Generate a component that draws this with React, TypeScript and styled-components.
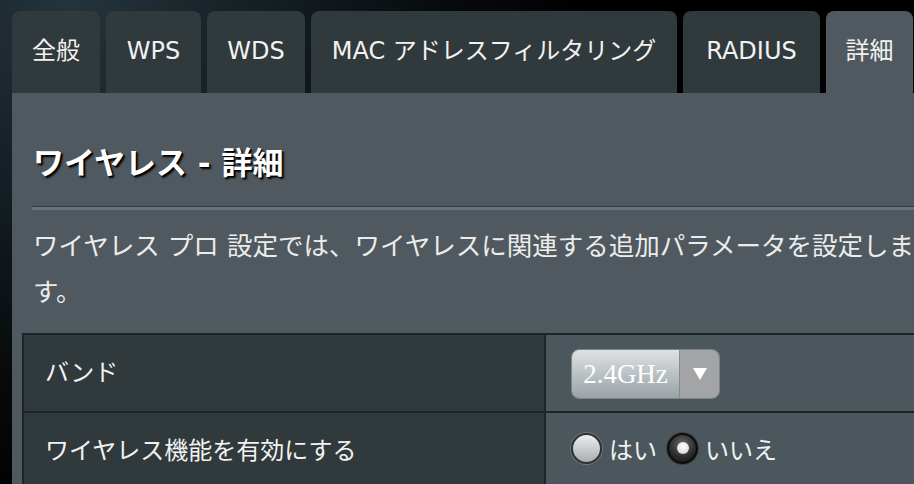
import React from "react";
import styled, { createGlobalStyle } from "styled-components";

const GlobalStyle = createGlobalStyle`
  html, body {
    margin: 0;
    padding: 0;
    overflow: hidden;
    height: 100%;
  }
  body {
    background: radial-gradient(circle at 70px 0px, #25343b 0px, #162127 170px, #070a0c 380px, #000 520px);
    font-family: "DejaVu Sans", "Noto Sans CJK JP", sans-serif;
    color: #fff;
  }
`;

const CJK = `"DejaVu Sans", "Noto Sans CJK JP", sans-serif`;

const Page = styled.div`
  padding: 11px 0 0 12px;
  width: 100vw;
  height: 100vh;
  box-sizing: border-box;
  overflow: hidden;
`;

const TabBar = styled.div`
  display: flex;
  gap: 6px;
`;

const Tab = styled.div<{ $active?: boolean; $width: number }>`
  flex: 0 0 auto;
  width: ${(p) => p.$width}px;
  height: 82px;
  box-sizing: border-box;
  padding-top: 26px;
  border-radius: 8px 8px 0 0;
  background: ${(p) => (p.$active ? "#4f595f" : "#30393c")};
  color: #f2f2f2;
  font-family: ${CJK};
  font-size: 24px;
  line-height: 28px;
  text-align: center;
  white-space: nowrap;
`;

const Panel = styled.div`
  width: 940px;
  height: 400px;
  box-sizing: border-box;
  padding: 0 10px;
  background: #4f595f;
`;

const Header = styled.div`
  margin: 0 11px 0 10px;
  padding-top: 52px;
`;

const Title = styled.h1`
  margin: 0 0 0 1px;
  font-family: ${CJK};
  font-size: 31px;
  line-height: 37px;
  font-weight: bold;
  color: #fff;
  text-shadow: 1px 1px 0 #000, 2px 2px 2px #000;
`;

const Divider = styled.div`
  margin-top: 24px;
  height: 3px;
  border-top: 1px solid #343d41;
  background: #6a757b;
`;

const Description = styled.p`
  margin: 13px 0 0 1px;
  font-family: ${CJK};
  font-size: 25.5px;
  line-height: 46px;
  color: #ececec;
`;

const SettingsTable = styled.div`
  margin-top: 18px;
  border: 2px solid #1f2426;
  border-right: none;
`;

const Row = styled.div`
  display: grid;
  grid-template-columns: 522px 1fr;
  height: 76px;
  & + & {
    border-top: 2px solid #1f2426;
  }
`;

const LabelCell = styled.div`
  display: flex;
  align-items: center;
  padding: 0 0 5px 21px;
  background: #30393c;
  border-right: 2px solid #1f2426;
  font-family: ${CJK};
  font-size: 24px;
  color: #f2f2f2;
`;

const ValueCell = styled.div`
  display: flex;
  align-items: center;
  padding-left: 25px;
  background: #4b575d;
`;

const Select = styled.div`
  display: flex;
  width: 149px;
  height: 50px;
  margin-top: 2px;
  box-sizing: border-box;
  border: 1px solid #7b8489;
  border-radius: 8px;
  overflow: hidden;
`;

const SelectValue = styled.div`
  width: 107px;
  display: flex;
  align-items: center;
  justify-content: center;
  background: linear-gradient(#dfe2e3, #b7bec1 55%, #9aa3a7);
  color: #fff;
  font-family: "Liberation Serif", serif;
  font-size: 27px;
  border-right: 1px solid #858b8e;
`;

const SelectArrow = styled.div`
  flex: 1;
  display: flex;
  align-items: center;
  justify-content: center;
  background: #a2a4a5;
`;

const RadioGroup = styled.div`
  display: flex;
  align-items: center;
  margin-top: -6px;
`;

const RadioMark = styled.span<{ $checked?: boolean }>`
  position: relative;
  display: block;
  flex: 0 0 31px;
  width: 31px;
  height: 31px;
  box-sizing: border-box;
  border-radius: 50%;
  border: 2px solid ${(p) => (p.$checked ? "#0c0c0c" : "#2e3335")};
  box-shadow: 0 0 0 1px ${(p) => (p.$checked ? "#3a4246" : "#6e777b")};
  background: ${(p) =>
    p.$checked
      ? "radial-gradient(circle at 50% 35%, #6a6a6a 0, #2a2a2a 60%, #111 100%)"
      : "linear-gradient(#eceeef, #c6cacc 55%, #a7adb0)"};
  &::after {
    content: "";
    display: ${(p) => (p.$checked ? "block" : "none")};
    position: absolute;
    left: 7.5px;
    top: 7.5px;
    width: 12px;
    height: 12px;
    border-radius: 50%;
    background: radial-gradient(circle at 50% 35%, #fff 0, #e4e4e4 60%, #bdbdbd 100%);
  }
`;

const RadioLabel = styled.span`
  margin: 0 10px 0 7px;
  font-family: ${CJK};
  font-size: 24px;
  color: #f2f2f2;
`;

const tabs = [
  { label: "全般", width: 88 },
  { label: "WPS", width: 95 },
  { label: "WDS", width: 98 },
  { label: "MAC アドレスフィルタリング", width: 366 },
  { label: "RADIUS", width: 137 },
  { label: "詳細", width: 87, active: true },
];

export default function App() {
  return (
    <>
      <GlobalStyle />
      <Page>
        <TabBar>
          {tabs.map((t) => (
            <Tab key={t.label} $width={t.width} $active={t.active}>
              {t.label}
            </Tab>
          ))}
        </TabBar>
        <Panel>
          <Header>
            <Title>ワイヤレス - 詳細</Title>
            <Divider />
            <Description>
              ワイヤレス プロ 設定では、ワイヤレスに関連する追加パラメータを設定します。
            </Description>
          </Header>
          <SettingsTable>
            <Row>
              <LabelCell>バンド</LabelCell>
              <ValueCell>
                <Select>
                  <SelectValue>2.4GHz</SelectValue>
                  <SelectArrow>
                    <svg width="14" height="12" viewBox="0 0 14 12">
                      <polygon points="0,0 14,0 7,12" fill="#fff" />
                    </svg>
                  </SelectArrow>
                </Select>
              </ValueCell>
            </Row>
            <Row>
              <LabelCell>ワイヤレス機能を有効にする</LabelCell>
              <ValueCell>
                <RadioGroup>
                  <RadioMark />
                  <RadioLabel>はい</RadioLabel>
                  <RadioMark $checked />
                  <RadioLabel>いいえ</RadioLabel>
                </RadioGroup>
              </ValueCell>
            </Row>
          </SettingsTable>
        </Panel>
      </Page>
    </>
  );
}
